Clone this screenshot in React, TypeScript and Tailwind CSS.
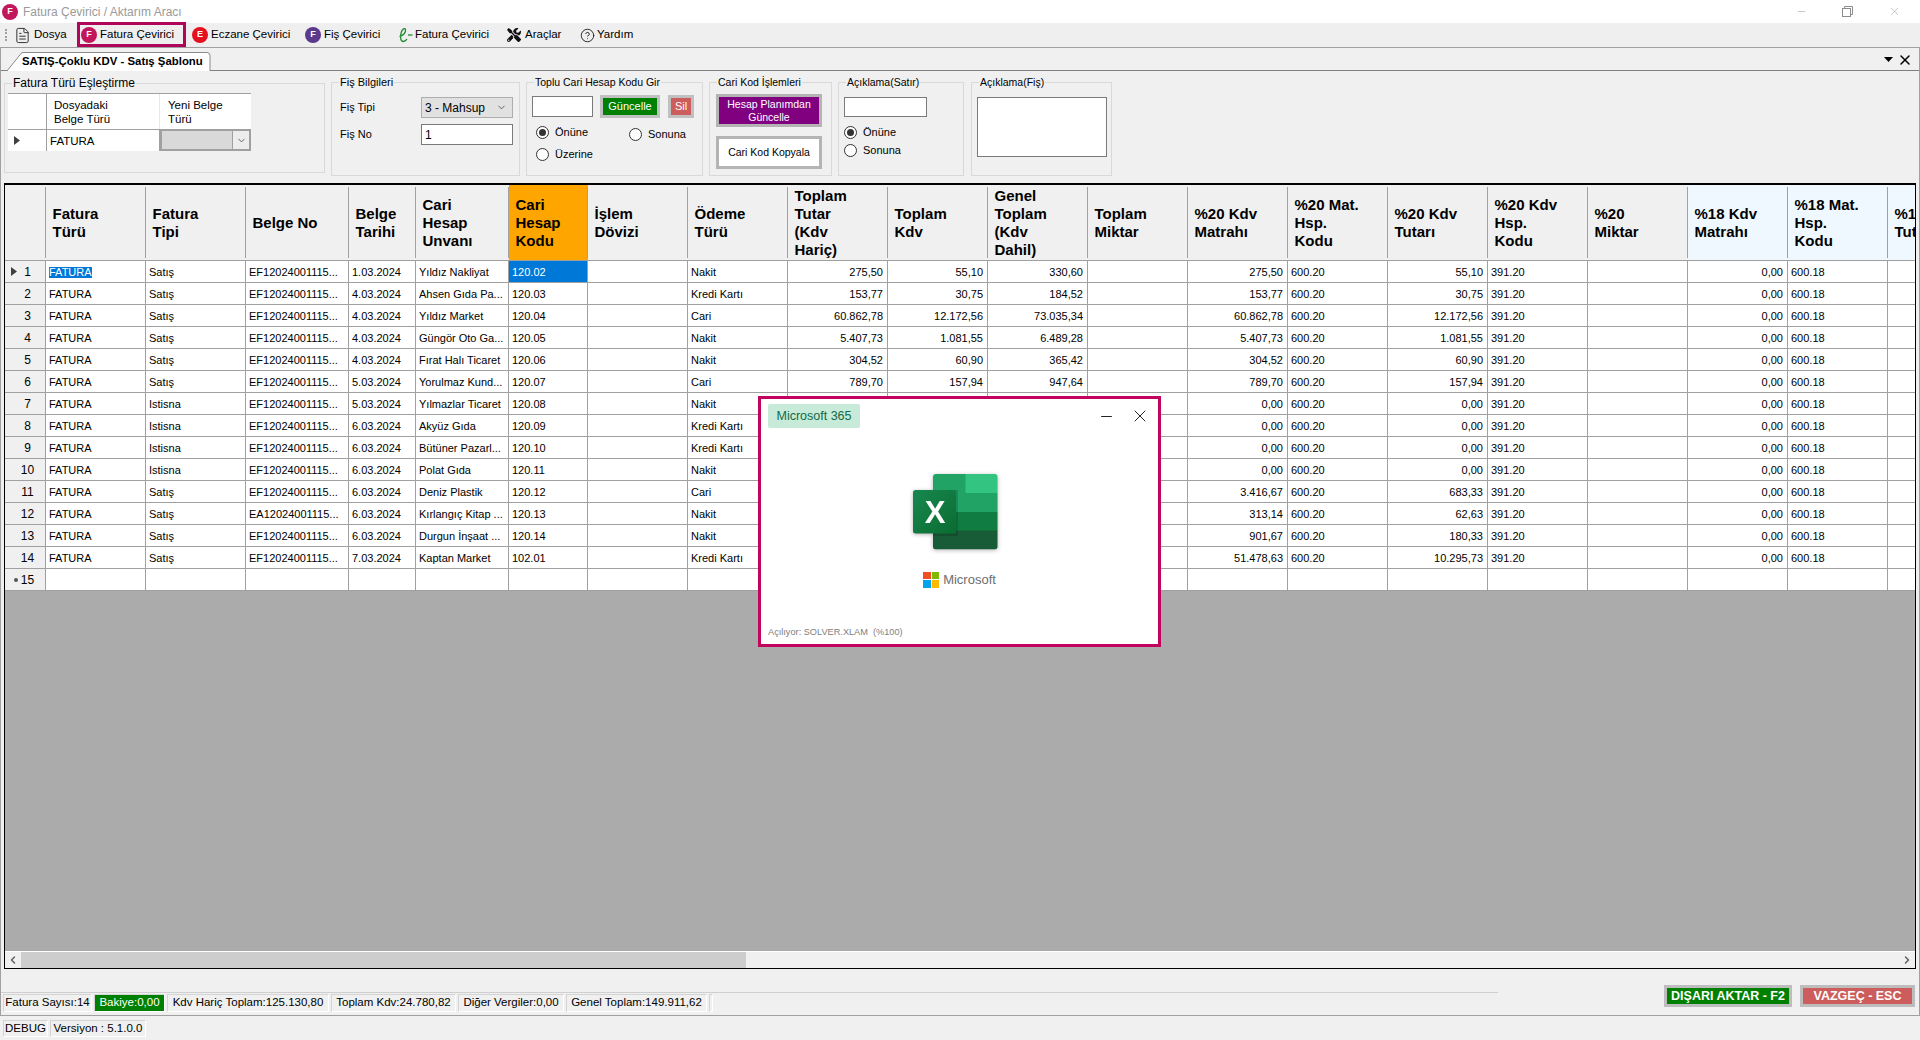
import { ChevronDown, ChevronLeft, ChevronRight, CircleHelp, FileText, Minus, X } from "lucide-react";
import { FaTools } from "react-icons/fa";
import type { ReactNode } from "react";

const gridCols =
  "grid grid-cols-[41px_100px_100px_103px_67px_93px_79px_100px_100px_100px_100px_100px_100px_100px_100px_100px_100px_100px_100px_100px_100px]";

const headers = [
  { label: "" },
  { label: "Fatura\nTürü" },
  { label: "Fatura\nTipi" },
  { label: "Belge No" },
  { label: "Belge\nTarihi" },
  { label: "Cari\nHesap\nUnvanı" },
  { label: "Cari\nHesap\nKodu", bg: "bg-[#ffa500]" },
  { label: "İşlem\nDövizi" },
  { label: "Ödeme\nTürü" },
  { label: "Toplam\nTutar\n(Kdv\nHariç)" },
  { label: "Toplam\nKdv" },
  { label: "Genel\nToplam\n(Kdv\nDahil)" },
  { label: "Toplam\nMiktar" },
  { label: "%20 Kdv\nMatrahı" },
  { label: "%20 Mat.\nHsp.\nKodu" },
  { label: "%20 Kdv\nTutarı" },
  { label: "%20 Kdv\nHsp.\nKodu" },
  { label: "%20\nMiktar" },
  { label: "%18 Kdv\nMatrahı", bg: "bg-[#f0f8ff]" },
  { label: "%18 Mat.\nHsp.\nKodu", bg: "bg-[#f0f8ff]" },
  { label: "%18 Kdv\nTutarı", bg: "bg-[#f0f8ff]" },
];

const rightAligned = [8, 9, 10, 12, 14, 17];

// hidden cells behind the splash window stay blank
const rows = [
  ["Satış", "EF12024001115...", "1.03.2024", "Yıldız Nakliyat", "120.02", "Nakit", "275,50", "55,10", "330,60", "275,50", "55,10"],
  ["Satış", "EF12024001115...", "4.03.2024", "Ahsen Gıda Pa...", "120.03", "Kredi Kartı", "153,77", "30,75", "184,52", "153,77", "30,75"],
  ["Satış", "EF12024001115...", "4.03.2024", "Yıldız Market", "120.04", "Cari", "60.862,78", "12.172,56", "73.035,34", "60.862,78", "12.172,56"],
  ["Satış", "EF12024001115...", "4.03.2024", "Güngör Oto Ga...", "120.05", "Nakit", "5.407,73", "1.081,55", "6.489,28", "5.407,73", "1.081,55"],
  ["Satış", "EF12024001115...", "4.03.2024", "Fırat Halı Ticaret", "120.06", "Nakit", "304,52", "60,90", "365,42", "304,52", "60,90"],
  ["Satış", "EF12024001115...", "5.03.2024", "Yorulmaz Kund...", "120.07", "Cari", "789,70", "157,94", "947,64", "789,70", "157,94"],
  ["Istisna", "EF12024001115...", "5.03.2024", "Yılmazlar Ticaret", "120.08", "Nakit", "", "", "", "0,00", "0,00"],
  ["Istisna", "EF12024001115...", "6.03.2024", "Akyüz Gıda", "120.09", "Kredi Kartı", "", "", "", "0,00", "0,00"],
  ["Istisna", "EF12024001115...", "6.03.2024", "Bütüner Pazarl...", "120.10", "Kredi Kartı", "", "", "", "0,00", "0,00"],
  ["Istisna", "EF12024001115...", "6.03.2024", "Polat Gıda", "120.11", "Nakit", "", "", "", "0,00", "0,00"],
  ["Satış", "EF12024001115...", "6.03.2024", "Deniz Plastik", "120.12", "Cari", "", "", "", "3.416,67", "683,33"],
  ["Satış", "EA12024001115...", "6.03.2024", "Kırlangıç Kitap ...", "120.13", "Nakit", "", "", "", "313,14", "62,63"],
  ["Satış", "EF12024001115...", "6.03.2024", "Durgun İnşaat ...", "120.14", "Nakit", "", "", "", "901,67", "180,33"],
  ["Satış", "EF12024001115...", "7.03.2024", "Kaptan Market", "102.01", "Kredi Kartı", "", "", "", "51.478,63", "10.295,73"],
];

function rowCells(r: string[]) {
  const [tipi, belge, tarih, unvan, kod, odeme, tutar, kdv, genel, m20, k20] = r;
  return ["FATURA", tipi, belge, tarih, unvan, kod, "", odeme, tutar, kdv, genel, "", m20, "600.20", k20, "391.20", "", "0,00", "600.18", ""];
}

function Arrow({ className }: { className?: string }) {
  return (
    <svg width="6" height="9" viewBox="0 0 6 9" className={className}>
      <polygon points="0,0 6,4.5 0,9" fill="#404040" />
    </svg>
  );
}

function Badge({ letter, color }: { letter: string; color: string }) {
  return (
    <span className={`flex h-[16px] w-[16px] items-center justify-center rounded-full text-[9px] font-bold text-white ${color}`}>
      {letter}
    </span>
  );
}

function GroupBox({
  title,
  titleSize,
  className,
  children,
}: {
  title: string;
  titleSize?: string;
  className: string;
  children: ReactNode;
}) {
  return (
    <div className={`relative shrink-0 border border-[#d9d9d9] ${className}`}>
      <span className={`absolute -top-[8px] left-[7px] bg-[#f0f0f0] px-[1px] leading-[14px] ${titleSize ?? "text-[10.5px]"}`}>{title}</span>
      {children}
    </div>
  );
}

function Radio({ label, checked, className }: { label: string; checked?: boolean; className?: string }) {
  return (
    <div className={`flex h-[14px] items-center ${className ?? ""}`}>
      <span className="flex h-[13px] w-[13px] items-center justify-center rounded-full border border-[#333] bg-white">
        {checked && <span className="h-[7px] w-[7px] rounded-full bg-[#333]" />}
      </span>
      <span className="ml-[6px]">{label}</span>
    </div>
  );
}

function HeaderCell({ label, bg }: { label: string; bg?: string }) {
  return (
    <div className={`flex min-h-0 border-b border-[#a0a0a0] ${bg ?? "bg-[#f0f0f0]"}`}>
      <div className="flex flex-1 items-center overflow-hidden whitespace-pre pl-[6.5px] text-[15px] font-bold leading-[18px]">{label}</div>
      <div className="my-[2px] w-px shrink-0 bg-[#a0a0a0]" />
    </div>
  );
}

function DataGrid() {
  return (
    <div className="flex h-[786px] flex-col overflow-hidden border border-t-2 border-black">
      <div className={`${gridCols} h-[76px] shrink-0`}>
        {headers.map((h, i) => (
          <HeaderCell key={i} label={h.label} bg={h.bg} />
        ))}
      </div>
      {rows.map((r, ri) => (
        <div key={ri} className={`${gridCols} h-[22px] shrink-0`}>
          <div className="relative flex items-center justify-center border-b border-r border-[#a0a0a0] bg-[#f0f0f0] pl-[5px] pt-[1px] text-[12px]">
            {ri === 0 && <Arrow className="absolute left-[6px] top-[6px]" />}
            {ri + 1}
          </div>
          {rowCells(r).map((c, ci) => {
            const selected = ri === 0 && ci === 5;
            return (
              <div
                key={ci}
                className={`flex items-center overflow-hidden whitespace-nowrap border-b border-r border-[#a0a0a0] pt-[1px] ${
                  rightAligned.includes(ci) ? "justify-end pr-[4px]" : "pl-[3px]"
                } ${selected ? "bg-[#0078d7] text-white" : "bg-white"}`}
              >
                {ri === 0 && ci === 0 ? <span className="bg-[#0078d7] leading-[11px] text-white">{c}</span> : c}
              </div>
            );
          })}
        </div>
      ))}
      <div className={`${gridCols} h-[22px] shrink-0`}>
        <div className="relative flex items-center justify-center border-b border-r border-[#a0a0a0] bg-[#f0f0f0] pl-[5px] pt-[1px] text-[12px]">
          <span className="absolute left-[9px] top-[9px] h-[4px] w-[4px] rounded-full bg-[#555]" />
          15
        </div>
        {rowCells(rows[0]).map((_, ci) => (
          <div key={ci} className="border-b border-r border-[#a0a0a0] bg-white" />
        ))}
      </div>
      <div className="min-h-0 flex-1 bg-[#ababab]" />
      <div className="flex h-[17px] shrink-0 border-t border-white bg-[#f0f0f0]">
        <div className="flex w-[16px] items-center justify-center">
          <ChevronLeft size={12} strokeWidth={3} color="#606060" />
        </div>
        <div className="w-[725px] bg-[#cdcdcd]" />
        <div className="flex-1" />
        <div className="flex w-[16px] items-center justify-center">
          <ChevronRight size={12} strokeWidth={3} color="#606060" />
        </div>
      </div>
    </div>
  );
}

function ExcelIcon() {
  return (
    <svg width="85" height="76" viewBox="0 0 85 76" className="-ml-[9px] mt-[46px] drop-shadow-[0_1px_2px_rgba(0,0,0,0.3)]">
      <defs>
        <linearGradient id="xl" x1="0" y1="0" x2="1" y2="1">
          <stop offset="0" stopColor="#18884f" />
          <stop offset="1" stopColor="#0a6c31" />
        </linearGradient>
        <clipPath id="sheet">
          <rect x="20" y="0" width="64.5" height="75.5" rx="3" />
        </clipPath>
      </defs>
      <g clipPath="url(#sheet)">
        <rect x="20" y="0" width="33" height="19" fill="#21a366" />
        <rect x="52.5" y="0" width="33" height="19" fill="#33c481" />
        <rect x="20" y="19" width="33" height="19" fill="#21a366" />
        <rect x="52.5" y="19" width="33" height="19" fill="#21a366" />
        <rect x="20" y="38" width="33" height="19" fill="#107c41" />
        <rect x="52.5" y="38" width="33" height="19" fill="#107c41" />
        <rect x="20" y="56.5" width="65" height="19" fill="#185c37" />
      </g>
      <rect x="20" y="16" width="25" height="46" fill="#000" opacity="0.15" />
      <rect x="0" y="16" width="43" height="43.5" rx="2.5" fill="url(#xl)" />
      <text x="22" y="49" textAnchor="middle" fill="#fff" fontSize="31" fontWeight="700" fontFamily="Liberation Sans, sans-serif">
        X
      </text>
    </svg>
  );
}

function SplashWindow() {
  return (
    <div className="absolute left-[758px] top-[396px] flex h-[251px] w-[403px] flex-col border-[3px] border-[#c2045f] bg-white">
      <div className="flex h-[29px] shrink-0 items-start justify-between pl-[7px] pr-[8px] pt-[5px]">
        <span className="flex h-[24px] w-[92px] items-center justify-center rounded-[2px] bg-[#c7ead9] text-[12.5px] text-[#106b47]">
          Microsoft 365
        </span>
        <div className="flex items-center gap-[15px] pt-[2px] text-[#222]">
          <Minus size={17} strokeWidth={1.4} />
          <X size={20} strokeWidth={1.2} />
        </div>
      </div>
      <div className="flex flex-col items-center">
        <ExcelIcon />
        <div className="mt-[20px] flex items-center gap-[4px]">
          <div className="grid h-[16px] w-[16px] grid-cols-2 gap-[1px]">
            <span className="bg-[#f25022]" />
            <span className="bg-[#7fba00]" />
            <span className="bg-[#00a4ef]" />
            <span className="bg-[#ffb900]" />
          </div>
          <span className="text-[13px] text-[#6e6e6e]">Microsoft</span>
        </div>
      </div>
      <div className="mt-auto pb-[5px] pl-[7px] text-[9.2px] leading-[13px] text-[#808080]">Açılıyor: SOLVER.XLAM&nbsp; (%100)</div>
    </div>
  );
}

function StatusCell({ width, children, green }: { width: string; children: ReactNode; green?: boolean }) {
  return (
    <div
      className={`flex h-full items-center justify-center whitespace-nowrap border border-b-white border-l-[#d4d4d4] border-r-white border-t-[#d4d4d4] text-[11.5px] ${width} ${
        green ? "border-[#7fbf7f] bg-[#008000] text-white" : ""
      }`}
    >
      {children}
    </div>
  );
}

export default function App() {
  return (
    <div className="relative flex h-[1040px] w-[1920px] flex-col overflow-hidden bg-[#f0f0f0] font-['Liberation_Sans',sans-serif] text-[11px] text-black">
      {/* title bar */}
      <div className="flex h-[23px] shrink-0 items-center bg-white pl-[2px]">
        <Badge letter="F" color="bg-[#c2185b]" />
        <span className="ml-[5px] text-[12px] text-[#9a9a9a]">Fatura Çevirici / Aktarım Aracı</span>
        <div className="ml-auto flex items-center gap-[35px] pr-[19px] text-[#9c9c9c]">
          <Minus size={11} strokeWidth={1.2} />
          <svg width="11" height="11" viewBox="0 0 11 11" fill="none" stroke="#8c8c8c">
            <rect x="0.5" y="2.5" width="8" height="8" fill="#fff" />
            <path d="M2.5 2.5v-2h8v8h-2" />
          </svg>
          <X size={13} strokeWidth={1} />
        </div>
      </div>

      {/* menu */}
      <div className="flex h-[24px] shrink-0 items-center whitespace-nowrap bg-[#efefef] text-[11.5px]">
        <span className="ml-[5px] h-[12px] w-[2px] border-l-2 border-dotted border-[#a0a0a0]" />
        <FileText size={17} strokeWidth={1.4} className="ml-[7px] text-[#333]" />
        <span className="ml-[3px] w-[30px]">Dosya</span>
        <div className="ml-[13px] -mt-[1px] flex h-[25px] w-[109px] items-center border-[3px] border-[#b0065a] pl-[1px]">
          <Badge letter="F" color="bg-[#c2185b]" />
          <span className="ml-[3px]">Fatura Çevirici</span>
        </div>
        <span className="ml-[6px]">
          <Badge letter="E" color="bg-[#e4101f]" />
        </span>
        <span className="ml-[3px] w-[78px]">Eczane Çevirici</span>
        <span className="ml-[16px]">
          <Badge letter="F" color="bg-[#5b3a8e]" />
        </span>
        <span className="ml-[3px] w-[56px]">Fiş Çevirici</span>
        <svg width="16" height="16" viewBox="0 0 16 16" fill="none" stroke="#1f8a2e" strokeWidth="1.3" className="ml-[17px]">
          <path d="M2.5 9.5C6.5 8.5 9 5.5 8.5 2.5 8 .8 5.3 1.5 4.2 5.5 3 10 3.5 14.5 6.2 14.5 7.8 14.5 9 13.5 10 12.2" />
          <path d="M11 8h4.5" />
        </svg>
        <span className="ml-[2px] w-[75px]">Fatura Çevirici</span>
        <FaTools size={14} className="ml-[17px] text-[#111]" />
        <span className="ml-[4px] w-[37px]">Araçlar</span>
        <CircleHelp size={15} strokeWidth={1.5} className="ml-[18px] text-[#222]" />
        <span className="ml-[2px]">Yardım</span>
      </div>

      {/* tab page */}
      <div className="flex h-[969px] shrink-0 flex-col border border-[#a0a0a0] pr-[3px]">
        <div className="-mr-[3px] flex h-[23px] shrink-0 border-b border-[#808080]">
          <div className="relative mt-[4px] h-[19px] w-[212px]">
            <svg width="212" height="19" viewBox="0 0 212 19" className="absolute inset-0">
              <path d="M6 19 L20 1.5 Q21 .5 22 .5 H206 Q209 .5 209 3.5 V19" fill="#fff" stroke="#8a8a8a" />
              <path d="M7 18.5H208" stroke="#fff" />
            </svg>
            <span className="relative flex h-full items-center pl-[21px] text-[11.4px] font-bold">SATIŞ-Çoklu KDV - Satış Şablonu</span>
          </div>
          <div className="ml-auto flex items-center gap-[4px] pr-[6px] pt-[1px]">
            <svg width="9" height="5" viewBox="0 0 9 5">
              <polygon points="0,0 9,0 4.5,5" fill="#000" />
            </svg>
            <X size={16} strokeWidth={2.2} />
          </div>
        </div>

        {/* filter groups */}
        <div className="flex h-[112px] shrink-0 items-start gap-[6px] pl-[3px] pt-[11px]">
          <GroupBox title="Fatura Türü Eşleştirme" titleSize="text-[12px]" className="mt-[1px] h-[90px] w-[321px] pl-[3px] pt-[9px]">
            <div className="grid w-[243px] grid-cols-[39px_113px_91px] grid-rows-[35px_22px] border-t border-[#a0a0a0] bg-white text-[11.5px] leading-[14px]">
              <div className="border-r border-[#a0a0a0]" />
              <div className="flex items-center whitespace-pre-line border-r border-[#e8e8e8] pl-[7px]">{"Dosyadaki\nBelge Türü"}</div>
              <div className="flex items-center whitespace-pre-line pl-[8px]">{"Yeni Belge\nTürü"}</div>
              <div className="flex items-center border-r border-t border-[#a0a0a0] pl-[6px]">
                <Arrow />
              </div>
              <div className="flex items-center border-r border-t border-[#a0a0a0] pl-[3px]">FATURA</div>
              <div className="flex items-center justify-end border-2 border-[#a0a0a0] bg-[#d9d9d9]">
                <span className="flex h-full w-[17px] items-center justify-center border-l border-[#a0a0a0] bg-[#ededed]">
                  <ChevronDown size={11} color="#555" />
                </span>
              </div>
            </div>
          </GroupBox>

          <GroupBox title="Fiş Bilgileri" titleSize="text-[11px]" className="h-[94px] w-[189px] pl-[8px] pt-[14px]">
            <div className="flex h-[21px] items-center">
              <span className="w-[81px]">Fiş Tipi</span>
              <div className="flex h-[21px] w-[92px] items-center justify-between border border-[#adadad] bg-[#e1e1e1] pl-[3px] pr-[5px] text-[12px]">
                3 - Mahsup
                <ChevronDown size={11} color="#555" />
              </div>
            </div>
            <div className="mt-[6px] flex h-[21px] items-center">
              <span className="w-[81px]">Fiş No</span>
              <div className="flex h-[21px] w-[92px] items-center border border-[#7a7a7a] bg-white pl-[3px] text-[12px]">1</div>
            </div>
          </GroupBox>

          <GroupBox title="Toplu Cari Hesap Kodu Gir" className="h-[94px] w-[177px] pl-[5px] pt-[12px]">
            <div className="flex items-center">
              <div className="h-[21px] w-[61px] border border-[#7a7a7a] bg-white" />
              <div className="ml-[7px] flex h-[23px] w-[60px] items-center justify-center border-[3px] border-[#c0c0c0] bg-[#008000] text-white">Güncelle</div>
              <div className="ml-[8px] flex h-[23px] w-[26px] items-center justify-center border-[3px] border-[#c0c0c0] bg-[#cd5c5c] text-white">Sil</div>
            </div>
            <div className="ml-[4px] mt-[7px] grid grid-cols-[93px_1fr] gap-y-[6px]">
              <Radio label="Önüne" checked />
              <Radio label="Sonuna" className="mt-[2px]" />
              <Radio label="Üzerine" />
            </div>
          </GroupBox>

          <GroupBox title="Cari Kod İşlemleri" className="h-[94px] w-[123px] pl-[6px] pt-[11px] text-[10.5px]">
            <div className="flex h-[33px] w-[106px] items-center justify-center whitespace-pre-line border-[3px] border-[#b4b4b4] bg-[#800080] text-center leading-[13px] text-white">
              {"Hesap Planımdan\nGüncelle"}
            </div>
            <div className="mt-[9px] flex h-[33px] w-[106px] items-center justify-center border-[3px] border-[#b4b4b4] bg-white">Cari Kod Kopyala</div>
          </GroupBox>

          <GroupBox title="Açıklama(Satır)" className="h-[94px] w-[126px] pl-[5px] pt-[14px]">
            <div className="h-[20px] w-[83px] border border-[#7a7a7a] bg-white" />
            <Radio label="Önüne" checked className="mt-[8px]" />
            <Radio label="Sonuna" className="mt-[4px]" />
          </GroupBox>

          <GroupBox title="Açıklama(Fiş)" className="ml-[1px] h-[94px] w-[141px] pl-[5px] pt-[14px]">
            <div className="h-[60px] w-[130px] border border-[#7a7a7a] bg-white" />
          </GroupBox>
        </div>

        <div className="pl-[3px]">
          <DataGrid />
        </div>

        {/* totals and actions */}
        <div className="-mr-[3px] flex min-h-0 flex-1 items-start">
          <div className="mt-[23px] flex h-[22px] w-[1497px] items-stretch gap-[2px] border-t border-[#cfcfcf] pb-[2px] pl-[2px] pt-[1px]">
            <StatusCell width="w-[89px]">Fatura Sayısı:14</StatusCell>
            <StatusCell width="w-[71px]" green>
              Bakiye:0,00
            </StatusCell>
            <StatusCell width="w-[162px]">Kdv Hariç Toplam:125.130,80</StatusCell>
            <StatusCell width="w-[125px]">Toplam Kdv:24.780,82</StatusCell>
            <StatusCell width="w-[106px]">Diğer Vergiler:0,00</StatusCell>
            <StatusCell width="w-[141px]">Genel Toplam:149.911,62</StatusCell>
            <StatusCell width="w-[4px]">{""}</StatusCell>
          </div>
          <div className="ml-[166px] mt-[16px] flex h-[22px] w-[128px] items-center justify-center border-[3px] border-[#bdbdbd] bg-[#008000] text-[12.5px] font-bold text-white">
            DIŞARI AKTAR - F2
          </div>
          <div className="ml-[8px] mt-[16px] flex h-[22px] w-[115px] items-center justify-center border-[3px] border-[#bdbdbd] bg-[#cd5c5c] text-[12.5px] font-bold text-white">
            VAZGEÇ - ESC
          </div>
        </div>
      </div>

      {/* bottom status */}
      <div className="flex h-[21px] items-stretch gap-[2px] pl-[3px] pt-[4px]">
        <StatusCell width="w-[45px]">DEBUG</StatusCell>
        <StatusCell width="w-[96px]">Versiyon : 5.1.0.0</StatusCell>
      </div>

      <SplashWindow />
    </div>
  );
}
